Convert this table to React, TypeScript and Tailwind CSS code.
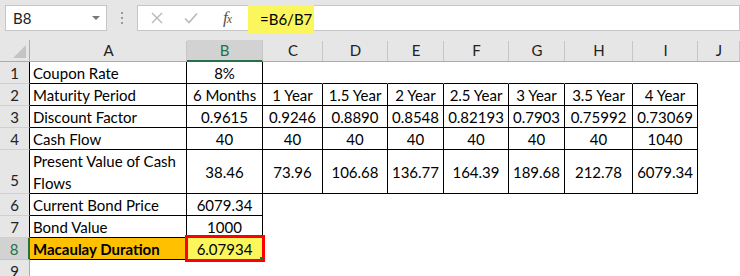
import { Fragment } from "react";

// Macaulay duration worksheet, Excel-style grid with formula bar

const COLS = ["A", "B", "C", "D", "E", "F", "G", "H", "I", "J"];

const ROWS: (string | null)[][] = [
  ["Coupon Rate", "8%"],
  ["Maturity Period", "6 Months", "1 Year", "1.5 Year", "2 Year", "2.5 Year", "3 Year", "3.5 Year", "4 Year"],
  ["Discount Factor", "0.9615", "0.9246", "0.8890", "0.8548", "0.82193", "0.7903", "0.75992", "0.73069"],
  ["Cash Flow", "40", "40", "40", "40", "40", "40", "40", "1040"],
  ["Present Value of Cash Flows", "38.46", "73.96", "106.68", "136.77", "164.39", "189.68", "212.78", "6079.34"],
  ["Current Bond Price", "6079.34"],
  ["Bond Value", "1000"],
  ["Macaulay Duration", "6.07934"],
  [],
];

const SELECTED_COL = 1;
const SELECTED_ROW = 8;

// which cells carry the black outline (table A1:B8 and C2:I5)
const hasRight = (r: number, c: number) =>
  r <= 8 && (c <= 1 || (c <= 8 && r >= 2 && r <= 5));
const hasBottom = (r: number, c: number) =>
  r <= 8 && (c <= 1 || (c <= 8 && r >= 1 && r <= 5));

function FormulaBar() {
  return (
    <div className="h-[40px] bg-[#e6e6e6] pt-[5px] flex items-start">
      {/* name box */}
      <div className="ml-[5px] w-[102px] h-[26px] bg-white border border-[#c6c6c6] flex items-center justify-between pl-[7px] pr-[6px]">
        <span className="text-[15px] text-[#222]">B8</span>
        <span className="w-0 h-0 border-l-[4px] border-r-[4px] border-t-[4px] border-l-transparent border-r-transparent border-t-[#777] mt-[-1px]" />
      </div>
      {/* grip dots */}
      <div className="w-[30px] h-[26px] flex flex-col items-center justify-center gap-[3px]">
        <span className="w-[2px] h-[2px] bg-[#9a9a9a]" />
        <span className="w-[2px] h-[2px] bg-[#9a9a9a]" />
        <span className="w-[2px] h-[2px] bg-[#9a9a9a]" />
      </div>
      {/* cancel / enter / insert function */}
      <div className="w-[111px] h-[26px] bg-white border border-[#c6c6c6] border-r-0 flex items-center">
        <svg width="12" height="12" viewBox="0 0 12 12" className="ml-[13px]">
          <path d="M1 1 L11 11 M11 1 L1 11" stroke="#b8b8b8" strokeWidth="1.4" fill="none" />
        </svg>
        <svg width="14" height="12" viewBox="0 0 14 12" className="ml-[21px]">
          <path d="M1 6.5 L5 10.5 L13 1.5" stroke="#b8b8b8" strokeWidth="1.6" fill="none" />
        </svg>
        <span className="ml-[25px] text-[17px] italic text-[#555] font-['Liberation_Serif',serif] tracking-[-1px]">
          f<span className="text-[12px]">x</span>
        </span>
      </div>
      {/* formula input */}
      <div className="flex-1 h-[26px] bg-white border border-[#c6c6c6] border-l-0 flex items-start">
        <div className="w-[66px] h-[28px] mt-[-1px] bg-[#fbf65c] flex items-center pl-[12px]">
          <span className="text-[15px] text-black">=B6/B7</span>
        </div>
      </div>
    </div>
  );
}

export default function App() {
  return (
    <div className="w-[740px] h-[276px] overflow-hidden bg-white font-['Lato',sans-serif] text-[15px] text-black">
      <FormulaBar />

      <div className="grid grid-cols-[30px_157px_76px_60px_65px_56px_65px_56px_68px_65px_1fr]">
        {/* header row: select-all corner */}
        <div className="h-[22px] bg-[#e6e6e6] border-r border-b border-[#ababab] flex items-end justify-end pr-[3px] pb-[3px]">
          <svg width="13" height="13" viewBox="0 0 13 13">
            <path d="M13 0 L13 13 L0 13 Z" fill="#c4c4c4" />
          </svg>
        </div>
        {COLS.map((c, i) => (
          <div
            key={c}
            className={
              i === SELECTED_COL
                ? "h-[22px] bg-[#d2d2d2] border-b-2 border-[#217346] border-r border-r-[#c6c6c6] flex items-center justify-center text-[#217346]"
                : "h-[22px] bg-[#e6e6e6] border-b border-[#ababab] relative flex items-center justify-center text-[#222]"
            }
          >
            {c}
            {i !== SELECTED_COL && (
              <span className="absolute right-0 top-[1px] bottom-0 w-px bg-[#c6c6c6]" />
            )}
          </div>
        ))}

        {/* data rows */}
        {ROWS.map((row, ri) => {
          const r = ri + 1;
          const tall = r === 5;
          return (
            <Fragment key={r}>
              <div
                className={
                  (tall ? "h-[44px] " : "h-[22px] ") +
                  (r === SELECTED_ROW
                    ? "bg-[#d2d2d2] text-[#217346] border-r-2 border-r-[#217346] border-b border-b-[#c6c6c6]"
                    : r <= 8
                    ? "bg-[#e6e6e6] text-[#222] border-r border-r-black border-b border-b-[#d0d0d0]"
                    : "bg-[#e6e6e6] text-[#222] border-r border-r-[#ababab] border-b border-b-[#d0d0d0]") +
                  " flex items-center justify-center pt-[1px] " +
                  (tall ? "items-end pb-[2px]" : "")
                }
              >
                {r}
              </div>
              {COLS.map((_, c) => {
                const val = row[c] ?? null;
                const right = hasRight(r, c) ? "border-r-black" : "border-r-transparent";
                const bottom = hasBottom(r, c) ? "border-b-black" : "border-b-transparent";
                let fill = "";
                if (r === 8 && c === 0) fill = "bg-[#ffc000] font-bold";
                if (r === 8 && c === 1) fill = "bg-[#fbf65c] relative";
                return (
                  <div
                    key={c}
                    className={`${tall ? "h-[44px]" : "h-[22px]"} border-r border-b ${right} ${bottom} ${fill} flex items-center whitespace-nowrap pt-[1px] ${
                      c === 0 ? "justify-start pl-[3px]" : "justify-center"
                    }`}
                  >
                    {c === 0 && tall ? (
                      <div className="leading-[22px] whitespace-normal">
                        Present Value of Cash
                        <br />
                        Flows
                      </div>
                    ) : (
                      val
                    )}
                    {r === 8 && c === 1 && (
                      <>
                        <span className="absolute left-[-2px] top-[-3px] right-[-3px] bottom-[-3px] border-[3px] border-[#ff0000] z-10" />
                        <span className="absolute right-[-1px] bottom-[-1px] w-[3px] h-[3px] bg-[#217346] z-20" />
                      </>
                    )}
                  </div>
                );
              })}
            </Fragment>
          );
        })}
      </div>
    </div>
  );
}
